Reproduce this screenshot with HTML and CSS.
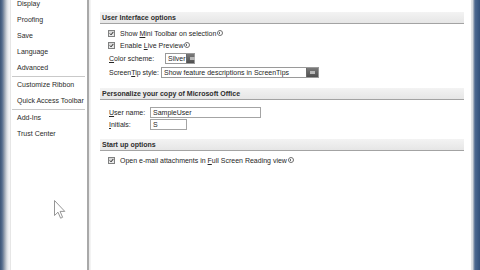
FILE: index.html
```html
<!DOCTYPE html>
<html>
<head>
<meta charset="utf-8">
<link rel="stylesheet" href="styles.css">
</head>
<body>
<div class="window">
  <div class="frame-left"></div>
  <nav class="sidebar">
    <ul class="nav-list">
      <li>Display</li>
      <li>Proofing</li>
      <li>Save</li>
      <li>Language</li>
      <li>Advanced</li>
      <li class="sep"></li>
      <li>Customize Ribbon</li>
      <li>Quick Access Toolbar</li>
      <li class="sep"></li>
      <li>Add-Ins</li>
      <li>Trust Center</li>
    </ul>
  </nav>
  <div class="divider"></div>
  <main class="content">
    <section class="group">
      <h2 class="group-title">User Interface options</h2>
      <div class="row check-row first">
        <span class="checkbox"><svg viewBox="0 0 7 7"><path d="M1.2 3.5 L2.9 5.3 L5.9 1.5" fill="none" stroke="#1e1e1e" stroke-width="1.4"/></svg></span>
        <span>Show <u>M</u>ini Toolbar on selection</span><span class="info"></span>
      </div>
      <div class="row check-row">
        <span class="checkbox"><svg viewBox="0 0 7 7"><path d="M1.2 3.5 L2.9 5.3 L5.9 1.5" fill="none" stroke="#1e1e1e" stroke-width="1.4"/></svg></span>
        <span>Enable <u>L</u>ive Preview</span><span class="info"></span>
      </div>
      <div class="row field-row">
        <span class="label label-short"><u>C</u>olor scheme:</span>
        <span class="select select-short"><span class="select-text">Silver</span><span class="drop"></span></span>
      </div>
      <div class="row field-row">
        <span class="label label-tip">Screen<u>T</u>ip style:</span>
        <span class="select select-long"><span class="select-text">Show feature descriptions in ScreenTips</span><span class="drop"></span></span>
      </div>
    </section>
    <section class="group">
      <h2 class="group-title">Personalize your copy of Microsoft Office</h2>
      <div class="row input-row first">
        <span class="label label-user"><u>U</u>ser name:</span>
        <span class="input input-long">SampleUser</span>
      </div>
      <div class="row input-row">
        <span class="label label-user"><u>I</u>nitials:</span>
        <span class="input input-short">S</span>
      </div>
    </section>
    <section class="group">
      <h2 class="group-title">Start up options</h2>
      <div class="row check-row first">
        <span class="checkbox"><svg viewBox="0 0 7 7"><path d="M1.2 3.5 L2.9 5.3 L5.9 1.5" fill="none" stroke="#1e1e1e" stroke-width="1.4"/></svg></span>
        <span>Open e-mail attachments in <u>F</u>ull Screen Reading view</span><span class="info"></span>
      </div>
    </section>
  </main>
  <div class="frame-right"></div>
  <svg class="cursor" viewBox="0 0 12 19" width="12" height="19">
    <path d="M0.5 0.5 L0.5 15.5 L4 12.2 L6.6 18.2 L8.6 17.3 L6.1 11.4 L10.8 11.4 Z" fill="#fff" stroke="#8a8a8a" stroke-width="0.9" stroke-linejoin="round"/>
  </svg>
</div>
</body>
</html>
```
FILE: styles.css
```css
* { box-sizing: border-box; }
html, body { margin: 0; padding: 0; }
body {
  width: 480px;
  height: 270px;
  overflow: hidden;
  background: #fff;
  font-family: "Liberation Sans", Arial, sans-serif;
  font-size: 7px;
  color: #262626;
}
.window {
  position: relative;
  display: flex;
  height: 270px;
}
.frame-left {
  width: 10px;
  flex: none;
  background: linear-gradient(to right, #3c5475 0, #516a8c 2px, #6d7f98 3px, #a7b0bc 5px, #d9dde2 7px, #f2f3f5 9px);
}
.sidebar {
  width: 79px;
  flex: none;
  background: #fff;
  border-left: 1px solid #e6e6e6;
  border-right: 2px solid #a9a9a9;
}
.nav-list {
  list-style: none;
  margin: -4px 0 0 0;
  padding: 0;
}
.nav-list li {
  height: 16px;
  line-height: 16px;
  padding-left: 6px;
  white-space: nowrap;
  color: #2a2a2a;
}
.nav-list li.sep {
  height: 1px;
  margin: 0 2px 0 1px;
  background: #c9c9c9;
}
.divider {
  width: 2px;
  flex: none;
  background: linear-gradient(to right, #e8e8e8, #f7f7f7);
}
.content {
  flex: 1;
  padding: 12px 7px 0 9px;
  background: #fff;
}
.group { margin-bottom: 9px; }
.group-title {
  margin: 0;
  height: 12px;
  line-height: 11px;
  padding-left: 2px;
  font-size: 7px;
  font-weight: bold;
  color: #2e2e2e;
  background: linear-gradient(to bottom, #f3f3f3, #e6e6e6);
  border-bottom: 1px solid #a3a3a3;
}
.row {
  display: flex;
  align-items: center;
  white-space: nowrap;
}
.check-row {
  height: 12px;
  padding-left: 8px;
}
.check-row.first { margin-top: 3px; }
.checkbox {
  width: 7px;
  height: 7px;
  border: 1px solid #7f8080;
  background: linear-gradient(to bottom, #d4d4d4, #ededed);
  margin-right: 5px;
  display: flex;
}
.checkbox svg { width: 100%; height: 100%; display: block; }
.info {
  display: inline-block;
  width: 6px;
  height: 6px;
  margin-left: 1px;
  border: 1px solid #6f6f6f;
  border-radius: 50%;
  position: relative;
}
.info::after {
  content: "";
  position: absolute;
  left: 1px;
  top: 1px;
  width: 1px;
  height: 2px;
  background: #6f6f6f;
}
.field-row {
  height: 14px;
  padding-left: 9px;
}
.input-row {
  height: 12px;
  padding-left: 9px;
}
.input-row.first { margin-top: 6px; }
.label { display: inline-block; }
.label-short { width: 56px; }
.label-tip { width: 52px; }
.label-user { width: 41px; }
.select {
  display: flex;
  height: 11px;
  border: 1px solid #9a9a9a;
  background: #fff;
  align-items: stretch;
}
.select-text { flex: 1; padding-left: 2px; line-height: 9px; }
.select-short { width: 30px; }
.select-long { width: 158px; }
.drop {
  width: 12px;
  background: linear-gradient(to bottom, #7a7a7a, #4f4f4f);
  border-left: 1px solid #6a6a6a;
  position: relative;
}
.drop::after {
  content: "";
  position: absolute;
  left: 3px;
  top: 3px;
  width: 5px;
  height: 3px;
  background: #b8b8b8;
}
.input {
  display: inline-block;
  height: 11px;
  line-height: 9px;
  border: 1px solid #a4a4a4;
  padding-left: 2px;
  background: #fff;
}
.input-long { width: 111px; }
.input-short { width: 37px; }
.frame-right {
  width: 9px;
  flex: none;
  background: linear-gradient(to right, #d4d7db 0, #eef0f2 1px, #c2c8d0 2px, #8193aa 3px, #4c6890 4px, #3b5a84 7px, #33507a 9px);
}
.cursor {
  position: absolute;
  left: 54px;
  top: 200px;
}
```
